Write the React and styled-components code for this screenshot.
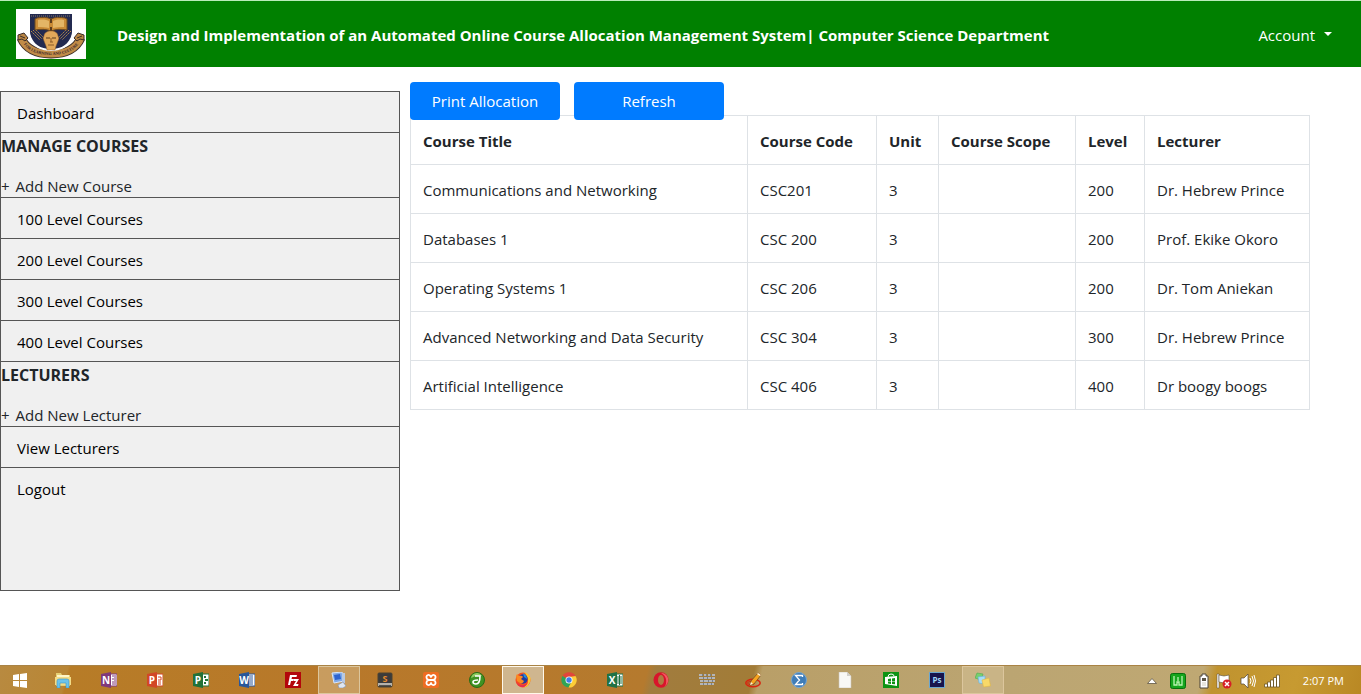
import React from "react";
import styled, { createGlobalStyle } from "styled-components";

const GlobalStyle = createGlobalStyle`
  *, *::before, *::after { box-sizing: border-box; }
  body {
    margin: 0;
    background: #fff;
    color: #212529;
    font-family: "Segoe UI", "Open Sans", "Noto Sans", sans-serif;
    font-size: 15px;
    line-height: 24px;
  }
  button { font: inherit; }
`;

const Page = styled.div`
  display: flex;
  flex-direction: column;
  min-height: 100vh;
`;

const Navbar = styled.header`
  display: flex;
  align-items: center;
  padding: 8px 29px 8px 16px;
  background: #008000;
  border-top: 1px solid #b9ecb9;
`;

const Brand = styled.a`
  display: flex;
  margin-right: 31px;
`;

const SystemTitle = styled.h1`
  flex: 1;
  margin: 0;
  padding-top: 2px;
  color: #fff;
  font-size: 15px;
  font-weight: 700;
`;

const AccountToggle = styled.button`
  display: flex;
  align-items: center;
  gap: 9px;
  padding: 2px 0 0;
  border: 0;
  background: none;
  color: #fff;
  cursor: pointer;

  &::after {
    content: "";
    margin-bottom: 2px;
    border: 4px solid transparent;
    border-top-color: #fff;
    border-bottom: 0;
  }
`;

const Body = styled.div`
  display: flex;
  flex: 1;
  align-items: flex-start;
  padding: 0 51px 24px 0;
`;

const Sidebar = styled.nav`
  flex: 0 0 400px;
  min-height: 500px;
  margin-top: 24px;
  border: 1px solid #555;
  background: #f0f0f0;
`;

const MenuList = styled.ul`
  margin: 0;
  padding: 0;
  list-style: none;
`;

const MenuItem = styled.li`
  border-bottom: 1px solid #555;
  &:last-child { border-bottom: 0; }
`;

const MenuLink = styled.a`
  display: block;
  padding: 9px 16px 7px;
  color: #000;
  text-decoration: none;
`;

const SectionTitle = styled.h2`
  margin: 0 0 16px;
  padding-top: 2px;
  font-size: 16px;
  font-weight: 700;
  line-height: 22px;
`;

const SectionLink = styled.a`
  display: flex;
  gap: 6px;
  padding-top: 2px;
  color: #212529;
  line-height: 22px;
  text-decoration: none;
`;

const Main = styled.main`
  flex: 1;
  min-width: 0;
  margin-left: 10px;
  padding-top: 15px;
`;

const Actions = styled.div`
  position: relative;
  z-index: 1;
  display: flex;
  gap: 14px;
  margin-bottom: -5px;
`;

const PrimaryButton = styled.button`
  width: 150px;
  padding: 7px 12px;
  border: 0;
  border-radius: 4px;
  background: #007bff;
  color: #fff;
  cursor: pointer;
`;

const Table = styled.table`
  width: 100%;
  border-collapse: collapse;
  table-layout: fixed;
`;

const Col = styled.col`
  width: ${(p) => (p.$width ? `${p.$width}px` : "auto")};
`;

const cell = `
  padding: 13px 12px 11px;
  border: 1px solid #dee2e6;
  text-align: left;
`;
const HeadCell = styled.th`${cell} font-weight: 700;`;
const Cell = styled.td`${cell}`;

const Taskbar = styled.footer`
  display: flex;
  justify-content: space-between;
  height: 29px;
  border-top: 1px solid #a98345;
  background: linear-gradient(105deg,
    #b88a40 0, #b98635 5%, #b77c27 5.2%, #b8782a 25%, #b57a2e 47.4%,
    #a17c3e 48%, #a27c37 55.2%, #b99f68 55.8%, #bba572 74%, #bfa873 88%,
    #c0932f 89%, #c79a31 95%, #b98824 100%);
`;

const TaskGroup = styled.div`
  display: flex;
`;

const StartButton = styled.button`
  display: grid;
  place-items: center;
  width: 40px;
  padding: 0;
  border: 0;
  background: none;
`;

const TaskButton = styled.button`
  display: grid;
  place-items: center;
  width: 42px;
  margin: 0 2px;
  padding: 0;
  border: 1px solid ${(p) => (p.$state === "focused" ? "#fff8ea" : p.$state ? "#dcc69d" : "transparent")};
  background: ${(p) => (p.$state === "focused" ? "#cfb68f" : p.$state ? "rgba(220, 200, 160, 0.45)" : "none")};
`;

const Tray = styled.div`
  display: flex;
  align-items: center;
  gap: 8px;
  padding: 2px 17px 0 0;
`;

const TrayButton = styled.button`
  display: flex;
  padding: 0;
  border: 0;
  background: none;
`;

const StatusGroup = styled.div`
  display: flex;
  gap: 8px;
  margin-left: -6px;
`;

const Clock = styled.time`
  margin-left: 15px;
  color: #fff;
  font-size: 11px;
  line-height: 16px;
`;

const IconText = styled.text`
  font-family: "Open Sans", sans-serif;
  font-weight: 700;
  text-anchor: middle;
`;

const Crest = () => (
  <svg width="70" height="50" viewBox="0 0 70 50" role="img" aria-label="University crest">
    <rect width="70" height="50" fill="#fff" />
    <path d="M14 5h42v18c0 10-8 17-21 19C22 40 14 33 14 23Z" fill="#232a50" />
    <path d="M15 7h40" stroke="#8a7a63" strokeDasharray="1 1" />
    <path d="M15 22l9 9M17 21l9 9M20 21l7 7M55 22l-9 9M53 21l-9 9M50 21l-7 7" stroke="#b58b4b" strokeDasharray="2 1" />
    <path d="M19 10l2-1c5-1 10-1 14 1 4-2 9-2 14-1l2 1v11c-6-1-11-1-16 1-5-2-10-2-16-1Z" fill="#c98b36" stroke="#6d4a20" />
    <path d="M22 11c5-1 9 0 11 1v7c-4-1-7-1-11-1ZM48 11c-5-1-9 0-11 1v7c4-1 7-1 11-1Z" fill="#e3b566" />
    <path d="M35 10v4M35 18v4" stroke="#5b3c1c" strokeWidth="2" />
    <path d="M5 29c5 11 15 16 30 16s25-5 30-16" fill="none" stroke="#3b2d28" strokeWidth="9" />
    <path d="M5 29c5 11 15 16 30 16s25-5 30-16" fill="none" stroke="#c18c48" strokeWidth="7" />
    <path d="M14 25c3 10 10 15 21 15s18-5 21-15l1 3c-3 9-11 14-22 14S16 37 13 28Z" fill="#fff" />
    <path d="M28 27c0-3 3-5 7-5s7 2 7 5l1 2-1 3-2 5-1 4h-8l-1-4-2-5-1-3Z" fill="#e2a85a" stroke="#8a5b28" strokeWidth=".5" />
    <path d="M30 29h4M36 29h4" stroke="#5b3c1c" strokeWidth="1.200" />
    <path d="M35 29v4M34 33h3M32 36h6" stroke="#8a5b28" fill="none" />
    <path d="M2 26l6-2 4 5-3 3-3-2-4 1ZM68 26l-6-2-4 5 3 3 3-2 4 1Z" fill="#b98543" stroke="#3b2d28" />
    <path d="M4 27l5 2M66 27l-5 2" stroke="#3b2d28" />
    <path id="motto" d="M5 31c5 10 15 15 30 15s25-5 30-15" fill="none" />
    <text fontFamily="Liberation Serif, serif" fontSize="4" fontWeight="700" fill="#33232b">
      <textPath href="#motto" startOffset="50%" textAnchor="middle">FOR LEARNING AND CULTURE</textPath>
    </text>
  </svg>
);

const Icon = ({ children, width = 16 }) => (
  <svg width={width} height="16" viewBox={`0 0 ${width} 16`} aria-hidden="true">{children}</svg>
);

const OfficeIcon = ({ color, letter, children }) => (
  <Icon>
    <path d="M8 2h8v12H8z" fill="#fff" stroke={color} />
    {children}
    <path d="M0 2l10-2v16L0 14Z" fill={color} />
    <IconText x="5" y="12" fontSize="10" fill="#fff">{letter}</IconText>
  </Icon>
);

const WindowsIcon = () => (
  <Icon>
    <path d="M1 3l6-1v6H1ZM8 2l7-1v7H8ZM1 9h6v6l-6-1ZM8 9h7v7l-7-1Z" fill="#fff" />
  </Icon>
);

const FolderIcon = () => (
  <Icon>
    <path d="M1 1h5l1 2h8v11H1Z" fill="#e6cf74" />
    <path d="M2 3h12v3H2Z" fill="#fff6c8" />
    <path d="M0 5h16v8H0Z" fill="#f3dc87" />
    <path d="M2 9q0-2 2-2h8q2 0 2 2v7h-3v-5H5v5H2Z" fill="#6cc3ea" stroke="#3b94c8" strokeWidth=".6" />
  </Icon>
);

const FileZillaIcon = () => (
  <Icon>
    <rect width="16" height="16" fill="#b3060b" />
    <path d="M5 3h7l-.5 2H7l-.5 2H9l-.5 2H6l-1 4H3ZM9 7h5l-3 5h2.500l-.5 2H8l3-5H9Z" fill="#fff" />
  </Icon>
);

const RemoteIcon = () => (
  <Icon>
    <path d="M1 1l10-1 2 9-10 2Z" fill="#7fa9e8" stroke="#d8e6fb" />
    <path d="M3 3l6-1 1 5-6 1Z" fill="#2e63cf" />
    <path d="M11 1h3v10h-3Z" fill="#b9c9e2" />
    <path d="M7 13l5-3 3 4-3 2H8Z" fill="#dfe7f2" stroke="#7d90b0" strokeWidth=".6" />
  </Icon>
);

const SublimeIcon = () => (
  <Icon>
    <rect x="1" y="1" width="14" height="14" rx="1" fill="#3b3b3b" stroke="#4a4232" />
    <path d="M1 11h14v3H1Z" fill="#b5b2ab" />
    <path d="M2 13h12v1H2Z" fill="#55534e" />
    <IconText x="8" y="10" fontSize="9" fill="#e88b2c">S</IconText>
  </Icon>
);

const XamppIcon = () => (
  <Icon>
    <rect width="16" height="16" rx="2" fill="#ef6c22" />
    <path d="M6 8L4 7q-1.500-3 1-4 2-.5 3 2 1-2.500 3-2 2.500 1 1 4l-2 1 2 1q1.500 3-1 4-2 .5-3-2-1 2.500-3 2-2.500-1-1-4ZM6 8h4" fill="none" stroke="#fff" strokeWidth="1.800" strokeLinejoin="round" />
  </Icon>
);

const GreenDiscIcon = () => (
  <Icon>
    <circle cx="8" cy="8" r="7.500" fill="#3f9323" stroke="#286c14" />
    <path d="M2 6a6 6 0 0 1 11-2Q7 3 2 6Z" fill="#91cc62" />
    <path d="M6 4h5q0 8-4 8-3 0-3-2t5-2" fill="none" stroke="#fff" strokeWidth="1.600" />
  </Icon>
);

const FirefoxIcon = () => (
  <Icon>
    <circle cx="8" cy="8" r="7.500" fill="#f4501f" />
    <path d="M9 0q7 2 6.500 8.500Q14 15 8 15.500q4-2 5-6Q13 4 9 0Z" fill="#ffc52e" />
    <circle cx="8" cy="7" r="4.700" fill="#233a9d" />
    <path d="M1 4l1-2 2 2q3-1 4 1L6 7l3 2q-1 3-4 2L2 9Z" fill="#fb8a22" />
    <path d="M8 1q4 2 4 6l-3-2Z" fill="#1c8fe0" />
    <path d="M1 9q2 5 8 4 3-1 4-4-1 6-6 6-5-1-6-6Z" fill="#e52a55" />
  </Icon>
);

const ChromeIcon = () => (
  <Icon>
    <path d="M8 8L1.500 4A7.500 7.500 0 0 1 14.500 4Z" fill="#e2453a" />
    <path d="M8 8L1.500 4A7.500 7.500 0 0 0 7.500 15.500L11 10Z" fill="#2fa456" />
    <path d="M8 5l6.500-1A7.500 7.500 0 0 1 7.500 15.500L11 9Z" fill="#fccd37" />
    <circle cx="8" cy="8" r="3.500" fill="#fff" />
    <circle cx="8" cy="8" r="2.700" fill="#3e7de8" />
  </Icon>
);

const OperaIcon = () => (
  <Icon>
    <ellipse cx="8" cy="8" rx="7.500" ry="7.800" fill="#d8152b" />
    <path d="M8 1q5 0 7 5 1 6-4 9 3-3 2-8-1-4-5-6Z" fill="#f25a61" />
    <ellipse cx="8" cy="8" rx="3" ry="5" fill="#af7b42" />
  </Icon>
);

const WallIcon = () => (
  <Icon>
    <path d="M0 2h3v2H0zM5 2h2v2H5zM9 2h2v2H9zM13 2h3v2h-3zM0 5h4v2H0zM5 5h3v2H5zM9 5h3v2H9zM13 5h3v2h-3zM1 8h3v2H1zM5 8h4v2H5zM10 8h3v2h-3zM14 8h2v2h-2zM1 11h3v2H1zM5 11h3v2H5zM9 11h3v2H9zM13 11h2v2h-2z" fill="#b4b5b8" />
    <path d="M3 2h1v2H3zM7 2h1v2H7zM11 2h1v2h-1zM4 5h1v2H4zM8 5h1v2H8zM12 5h1v2h-1zM4 8h1v2H4zM9 8h1v2H9zM13 8h1v2h-1zM4 11h1v2H4zM8 11h1v2H8zM12 11h1v2h-1z" fill="#76808e" />
  </Icon>
);

const PencilIcon = () => (
  <Icon>
    <ellipse cx="8" cy="11" rx="7.200" ry="3.800" fill="none" stroke="#d9240e" strokeWidth="1.500" />
    <ellipse cx="6" cy="11" rx="3.500" ry="1.500" fill="none" stroke="#d9240e" />
    <path d="M5 13l1-4 7-8 3 2-7 9Z" fill="#f7a51f" stroke="#70441a" strokeWidth=".7" />
    <path d="M12 2l1-1 3 2-1 1ZM5 13l1-3 2 2Z" fill="#fff2d6" />
  </Icon>
);

const SigmaIcon = () => (
  <Icon>
    <circle cx="8" cy="8" r="7.500" fill="#3f7db8" stroke="#76a5cf" />
    <path d="M11.500 5V3.500h-7L8.500 8l-4 4.500h7V11" fill="none" stroke="#fff" strokeWidth="1.300" />
  </Icon>
);

const DocumentIcon = () => (
  <Icon>
    <path d="M2 0h8l4 4v12H2Z" fill="#f8f8f6" stroke="#c9c4ba" strokeWidth=".6" />
    <path d="M10 0v4h4Z" fill="#d2d0cb" />
  </Icon>
);

const StoreIcon = () => (
  <Icon>
    <rect width="16" height="16" fill="#0d9313" />
    <path d="M2 5l12-1v10L2 12Z" fill="#fff" />
    <path d="M5 5q0-3 3-3t3 2" fill="none" stroke="#fff" />
    <path d="M5 7l3-.5V9H5ZM9 6.500l3-.5v3H9ZM5 9.500h3V12l-3-.5ZM9 9.500h3v2.800L9 12Z" fill="#0d9313" />
  </Icon>
);

const PhotoshopIcon = () => (
  <Icon>
    <rect x=".5" y=".5" width="15" height="15" fill="#17144d" stroke="#6ba7cf" />
    <IconText x="8" y="11" fontSize="8" fill="#9fd6f7">Ps</IconText>
  </Icon>
);

const NotesIcon = () => (
  <Icon>
    <path d="M2 1l6 1-2 6-6-2Z" fill="#77cf6e" stroke="#4fab50" strokeWidth=".6" />
    <path d="M3 5l7-1v8l-6-1Z" fill="#a9dcf5" stroke="#65b4de" strokeWidth=".6" />
    <path d="M7 8l7-2 1.500 8-7 1Z" fill="#f8d968" stroke="#e0b844" strokeWidth=".6" />
  </Icon>
);

const tasks = [
  { label: "File Explorer", icon: <FolderIcon /> },
  { label: "OneNote", icon: <OfficeIcon color="#80397b" letter="N"><path d="M11 4h2M11 7h2M11 10h2M11 12h2M14 3v10" stroke="#80397b" /></OfficeIcon> },
  { label: "PowerPoint", icon: <OfficeIcon color="#d24726" letter="P"><path d="M11 5h3v3h-3M11 10h3M11 12h3" stroke="#d24726" fill="none" /></OfficeIcon> },
  { label: "Project", icon: <OfficeIcon color="#227238" letter="P"><path d="M11 4h2v2h-2zM12 7h3v2h-3zM11 10h2v2h-2z" fill="#227238" /></OfficeIcon> },
  { label: "Word", icon: <OfficeIcon color="#2a579a" letter="W"><path d="M10 4h4M10 6h4M10 8h4M10 10h4M10 12h4" stroke="#2a579a" /></OfficeIcon> },
  { label: "FileZilla", icon: <FileZillaIcon /> },
  { label: "Remote Desktop", icon: <RemoteIcon />, state: "open" },
  { label: "Sublime Text", icon: <SublimeIcon /> },
  { label: "XAMPP", icon: <XamppIcon /> },
  { label: "Dreamweaver", icon: <GreenDiscIcon /> },
  { label: "Firefox", icon: <FirefoxIcon />, state: "focused" },
  { label: "Chrome", icon: <ChromeIcon /> },
  { label: "Excel", icon: <OfficeIcon color="#207245" letter="X"><path d="M12.500 3v10M10 5h5M10 7h5M10 9h5M10 11h5" stroke="#207245" /></OfficeIcon> },
  { label: "Opera", icon: <OperaIcon /> },
  { label: "Firewall", icon: <WallIcon /> },
  { label: "Annotate", icon: <PencilIcon /> },
  { label: "Math", icon: <SigmaIcon /> },
  { label: "Document", icon: <DocumentIcon /> },
  { label: "Store", icon: <StoreIcon /> },
  { label: "Photoshop", icon: <PhotoshopIcon /> },
  { label: "Sticky Notes", icon: <NotesIcon />, state: "open" },
];

const trayItems = [
  { label: "Show hidden icons", icon: <Icon width={20}><path d="M5.500 10.500l4.500-5 4.500 5Z" fill="#fff" stroke="#5e5644" strokeWidth=".8" /></Icon> },
  { label: "Status", icon: <Icon><rect x=".5" y=".5" width="15" height="15" rx="2" fill="#15a51d" stroke="#076f0d" /><path d="M4 3v9h3V9h2v3h3V3M8 4v4" fill="none" stroke="#bcf4b2" strokeWidth="1.300" /></Icon> },
  { label: "Battery", icon: <Icon width={20}><path d="M8 1h4v2h2v12H6V3h2Z" fill="#fff" stroke="#4b453a" /><path d="M8 5h4v3H8z" fill="#5c5547" /><path d="M8 9h4v4H8z" fill="#e8e6df" /></Icon> },
];

const statusItems = [
  { label: "Action Center", icon: <Icon><path d="M1 1h2v14H1Z" fill="#fff" stroke="#544b3b" strokeWidth=".5" /><path d="M3 2l5 1 5-1v7l-5 1-5-1Z" fill="#fff" stroke="#544b3b" strokeWidth=".6" /><circle cx="11" cy="11" r="4.500" fill="#d61f26" /><path d="M9 9l4 4M13 9l-4 4" stroke="#fff" strokeWidth="1.500" /></Icon> },
  { label: "Volume", icon: <Icon><path d="M1 5h3l4-4v14l-4-4H1Z" fill="#fff" stroke="#4d4433" strokeWidth=".7" /><path d="M10 5q2 3 0 6M12 3q3 5 0 10M14 2q3 6 0 12" fill="none" stroke="#fff" /></Icon> },
  { label: "Network", icon: <Icon><path d="M.5 11h3v3h-3zM3.500 9h3v5h-3zM6.500 7h3v7h-3zM9.500 4.500h3v9.500h-3zM12.500 2h3v12h-3z" fill="#fff" stroke="#6b5423" strokeWidth=".8" /></Icon> },
];

const courses = [
  ["Communications and Networking", "CSC201", "3", "", "200", "Dr. Hebrew Prince"],
  ["Databases 1", "CSC 200", "3", "", "200", "Prof. Ekike Okoro"],
  ["Operating Systems 1", "CSC 206", "3", "", "200", "Dr. Tom Aniekan"],
  ["Advanced Networking and Data Security", "CSC 304", "3", "", "300", "Dr. Hebrew Prince"],
  ["Artificial Intelligence", "CSC 406", "3", "", "400", "Dr boogy boogs"],
];

const columns = [
  { title: "Course Title" },
  { title: "Course Code", width: 129 },
  { title: "Unit", width: 62 },
  { title: "Course Scope", width: 137 },
  { title: "Level", width: 69 },
  { title: "Lecturer", width: 165 },
];

const menu = [
  { label: "Dashboard" },
  { section: "MANAGE COURSES", label: "Add New Course" },
  { label: "100 Level Courses" },
  { label: "200 Level Courses" },
  { label: "300 Level Courses" },
  { label: "400 Level Courses" },
  { section: "LECTURERS", label: "Add New Lecturer" },
  { label: "View Lecturers" },
  { label: "Logout" },
];

export default function App() {
  return (
    <Page>
      <GlobalStyle />
      <Navbar>
        <Brand href="#"><Crest /></Brand>
        <SystemTitle>
          Design and Implementation of an Automated Online Course Allocation Management System| Computer Science Department
        </SystemTitle>
        <AccountToggle type="button" aria-haspopup="menu">Account</AccountToggle>
      </Navbar>

      <Body>
        <Sidebar aria-label="Main menu">
          <MenuList>
            {menu.map((item) => (
              <MenuItem key={item.label}>
                {item.section ? (
                  <>
                    <SectionTitle>{item.section}</SectionTitle>
                    <SectionLink href="#"><span>+</span> <span>{item.label}</span></SectionLink>
                  </>
                ) : (
                  <MenuLink href="#">{item.label}</MenuLink>
                )}
              </MenuItem>
            ))}
          </MenuList>
        </Sidebar>

        <Main>
          <Actions>
            <PrimaryButton type="button">Print Allocation</PrimaryButton>
            <PrimaryButton type="button">Refresh</PrimaryButton>
          </Actions>
          <Table>
            <colgroup>
              {columns.map((c) => <Col key={c.title} $width={c.width} />)}
            </colgroup>
            <thead>
              <tr>{columns.map((c) => <HeadCell key={c.title} scope="col">{c.title}</HeadCell>)}</tr>
            </thead>
            <tbody>
              {courses.map((row) => (
                <tr key={row[0]}>
                  {row.map((value, i) => <Cell key={columns[i].title}>{value}</Cell>)}
                </tr>
              ))}
            </tbody>
          </Table>
        </Main>
      </Body>

      <Taskbar>
        <TaskGroup>
          <StartButton type="button" aria-label="Start"><WindowsIcon /></StartButton>
          {tasks.map((t) => (
            <TaskButton key={t.label} type="button" aria-label={t.label} $state={t.state}>{t.icon}</TaskButton>
          ))}
        </TaskGroup>
        <Tray>
          {trayItems.map((t) => (
            <TrayButton key={t.label} type="button" aria-label={t.label}>{t.icon}</TrayButton>
          ))}
          <StatusGroup>
            {statusItems.map((t) => (
              <TrayButton key={t.label} type="button" aria-label={t.label}>{t.icon}</TrayButton>
            ))}
          </StatusGroup>
          <Clock>2:07 PM</Clock>
        </Tray>
      </Taskbar>
    </Page>
  );
}
